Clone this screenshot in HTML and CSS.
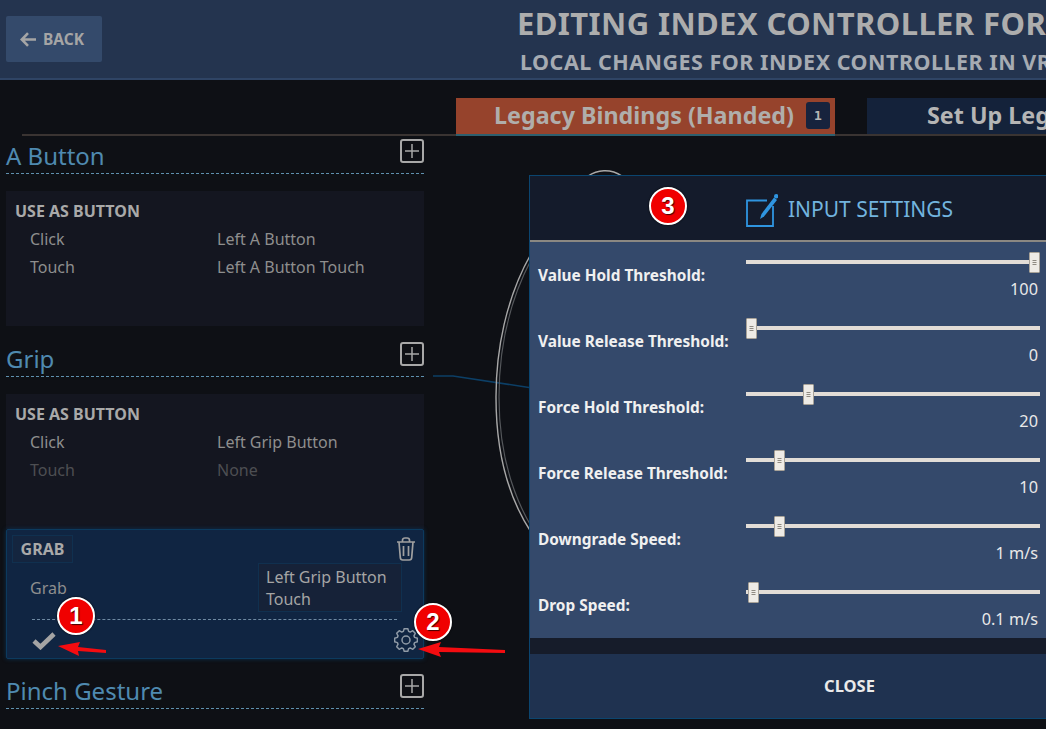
FILE: index.html
```html
<!DOCTYPE html>
<html lang="en">
<head>
<meta charset="utf-8">
<title>Editing Index Controller</title>
<link rel="stylesheet" href="styles.css">
</head>
<body>
<div class="page">
  <header class="topbar">
    <button class="back"><svg class="back-arrow" viewBox="0 0 16 15"><path d="M8 1.200 1.800 7.500 8 13.800M2.500 7.500H16" fill="none" stroke="currentColor" stroke-width="2.600"/></svg>BACK</button>
    <div class="titles">
      <div class="title">EDITING INDEX CONTROLLER FOR</div>
      <div class="subtitle">LOCAL CHANGES FOR INDEX CONTROLLER IN VR</div>
    </div>
  </header>

  <nav class="tabs">
    <div class="tab tab-active">Legacy Bindings (Handed)<span class="count">1</span></div>
    <div class="tab tab-next">Set Up Legacy Bindings</div>
  </nav>

  <svg class="art" viewBox="0 0 1046 729">
    <path class="wire" d="M433 376H453L529 387.500"/>
    <path class="shell" d="M531 254C506 298 496 350 496 397C496 450 508 497 531 532"/>
    <path class="shell2" d="M531 260C509 302 499 350 499 397C499 445 510 490 531 526"/>
    <path class="shell" d="M588 176C597 170 610 168 622 176"/>
  </svg>

  <main class="bindings">
    <section class="group">
      <div class="group-head"><h2>A Button</h2><svg class="plus" viewBox="0 0 24 24"><rect x="1" y="1" width="22" height="22" rx="2"/><path class="plus-bar" d="M12 5v14M5 12h14"/></svg></div>
      <div class="card">
        <h3>USE AS BUTTON</h3>
        <div class="bind"><span>Click</span><span>Left A Button</span></div>
        <div class="bind"><span>Touch</span><span>Left A Button Touch</span></div>
      </div>
    </section>

    <section class="group">
      <div class="group-head"><h2>Grip</h2><svg class="plus" viewBox="0 0 24 24"><rect x="1" y="1" width="22" height="22" rx="2"/><path class="plus-bar" d="M12 5v14M5 12h14"/></svg></div>
      <div class="card">
        <h3>USE AS BUTTON</h3>
        <div class="bind"><span>Click</span><span>Left Grip Button</span></div>
        <div class="bind bind-off"><span>Touch</span><span>None</span></div>
      </div>
      <div class="card-edit">
        <div class="edit-head">
          <span class="chip">GRAB</span>
          <svg class="trash" viewBox="0 0 20 24"><path d="M1 5h18M6.500 5V3.200C6.500 2 7.500 1 9 1h2c1.500 0 2.500 1 2.500 2.200V5M3 5l1.300 15.500C4.400 22 5.300 23 6.700 23h6.600c1.400 0 2.300-1 2.400-2.500L17 5M7.500 9v10M12.500 9v10"/></svg>
        </div>
        <div class="edit-row">
          <span class="edit-name">Grab</span>
          <span class="edit-value">Left Grip Button Touch</span>
        </div>
        <div class="edit-foot">
          <svg class="check" viewBox="0 0 24 19"><path d="M2 10l6.500 6L22 3" fill="none" stroke="currentColor" stroke-width="4.600"/></svg>
          <svg class="gear" viewBox="0 0 24 24"><path d="M9.370 3.390 10.200.64H13.800L14.630 3.390 16.220 4.050 18.760 2.700 21.300 5.240 19.950 7.780 20.610 9.370 23.360 10.200V13.800L20.610 14.630 19.950 16.220 21.300 18.760 18.760 21.300 16.220 19.950 14.630 20.610 13.800 23.360H10.200L9.370 20.610 7.780 19.950 5.240 21.300 2.700 18.760 4.050 16.220 3.390 14.630 .64 13.800V10.200L3.390 9.370 4.050 7.780 2.700 5.240 5.240 2.700 7.780 4.050Z"/><circle cx="12" cy="12" r="4"/></svg>
        </div>
      </div>
    </section>

    <section class="group group-last">
      <div class="group-head"><h2>Pinch Gesture</h2><svg class="plus" viewBox="0 0 24 24"><rect x="1" y="1" width="22" height="22" rx="2"/><path class="plus-bar" d="M12 5v14M5 12h14"/></svg></div>
    </section>
  </main>

  <aside class="modal">
    <div class="modal-head">
      <svg class="edit-icon" viewBox="0 0 32 35"><path d="M21 8.500H1V34H27V14" fill="none" stroke="#2f95e0" stroke-width="1.800"/><path d="M15.500 22 14 27l4-2.500L31 8l-3-2.500z" fill="#2f95e0"/><circle cx="30.200" cy="4.300" r="2.200" fill="#2f95e0"/></svg>
      <span class="modal-title">INPUT SETTINGS</span>
    </div>
    <div class="modal-body">
      <div class="setting"><div class="setting-label">Value Hold Threshold:</div><div class="setting-ctl"><div class="track"><div class="thumb" style="--v:1"></div></div><div class="setting-val">100</div></div></div>
      <div class="setting"><div class="setting-label">Value Release Threshold:</div><div class="setting-ctl"><div class="track"><div class="thumb" style="--v:0"></div></div><div class="setting-val">0</div></div></div>
      <div class="setting"><div class="setting-label">Force Hold Threshold:</div><div class="setting-ctl"><div class="track"><div class="thumb" style="--v:.2"></div></div><div class="setting-val">20</div></div></div>
      <div class="setting"><div class="setting-label">Force Release Threshold:</div><div class="setting-ctl"><div class="track"><div class="thumb" style="--v:.1"></div></div><div class="setting-val">10</div></div></div>
      <div class="setting"><div class="setting-label">Downgrade Speed:</div><div class="setting-ctl"><div class="track"><div class="thumb" style="--v:.1"></div></div><div class="setting-val">1 m/s</div></div></div>
      <div class="setting"><div class="setting-label">Drop Speed:</div><div class="setting-ctl"><div class="track"><div class="thumb" style="--v:.007"></div></div><div class="setting-val">0.1 m/s</div></div></div>
    </div>
    <div class="modal-strip"></div>
    <div class="modal-foot">CLOSE</div>
  </aside>

  <svg class="arrows" viewBox="0 0 1046 729">
    <path d="M58 646 80 642 78 647 106 650 106 653 78 651 79 656z"/>
    <path d="M418 649 441 642 439 647 505 650 505 653 439 652 441 657z"/>
  </svg>
  <div class="marker marker-1">1</div>
  <div class="marker marker-2">2</div>
  <div class="marker marker-3">3</div>
</div>
</body>
</html>
```

FILE: styles.css
```css
* { box-sizing: border-box; }
html, body { margin: 0; padding: 0; }
body { background: #0e1015; font-family: "Noto Sans", "Open Sans", sans-serif; }
.page { position: relative; width: 1046px; height: 729px; overflow: hidden; background: #0e1015; color: #a9a9a9; }

.topbar { height: 80px; display: flex; align-items: flex-start; background: #24344f; border-bottom: 2px solid #2f4465; }
.back { flex: none; margin: 16px 0 0 6px; width: 96px; height: 46px; display: flex; align-items: center; justify-content: center; gap: 7px; padding: 0 4px 0 0; border: 0; border-radius: 2px; background: #344a6b; color: #a5a5a5; font: 700 15.500px "Noto Sans", sans-serif; }
.back-arrow { width: 16px; height: 15px; }
.titles { margin-left: 415px; flex: none; white-space: nowrap; }
.title { margin-top: 4px; font-size: 31px; line-height: 38px; font-weight: 700; letter-spacing: .4px; color: #adadad; }
.subtitle { margin-top: 6px; margin-left: 3px; font-size: 21.500px; line-height: 28px; font-weight: 700; letter-spacing: .5px; color: #a6abb2; }

.tabs { height: 38px; margin: 18px 0 0 22px; display: flex; align-items: flex-start; border-bottom: 2px solid #3a3432; padding-left: 434px; white-space: nowrap; }
.tab { flex: none; display: flex; align-items: center; font-size: 23.300px; font-weight: 700; color: #b0aeab; }
.tab-active { width: 379px; height: 38px; padding: 0 0 2px 38px; background: #96432c; border-bottom: 2px solid #2d5f6e; }
.count { margin-left: 12px; width: 24px; height: 27px; display: flex; align-items: center; justify-content: center; border-radius: 3px; background: #17233d; color: #b6b6b6; font: 700 13px "DejaVu Sans Mono", monospace; }
.tab-next { margin-left: 32px; width: 400px; height: 36px; padding: 0 0 2px 60px; background: #14223a; color: #b5b5b5; }

.art { position: absolute; left: 0; top: 0; width: 1046px; height: 729px; fill: none; pointer-events: none; }
.wire { stroke: #0c3f66; stroke-width: 1.500; }
.shell { stroke: #a8a8a8; stroke-width: 1.400; }
.shell2 { stroke: #55585c; stroke-width: 1.200; }

.bindings { position: relative; width: 418px; margin: 0 0 0 6px; }
.group-head { position: relative; height: 38px; display: flex; justify-content: space-between; border-bottom: 1px dashed #5f90ae; }
.group-head h2 { margin: 4px 0 0; font-size: 24px; line-height: 32px; font-weight: 400; color: #4f8ab0; }
.plus { width: 24px; height: 24px; margin-top: 3px; fill: none; stroke: #a8a8a8; stroke-width: 2; }
.plus-bar { stroke-width: 1.500; }
.group + .group { margin-top: 13px; }
.group + .group-last { margin-top: 12px; }
.card { margin-top: 17px; height: 135px; padding: 8px 9px; background: #141620; font-size: 16px; line-height: 28px; color: #8e8e8e; }
.card h3 { margin: 0; font-size: 16px; line-height: 24px; font-weight: 700; color: #a9a9a9; }
.bind { display: grid; grid-template-columns: 187px 1fr; padding-left: 15px; position: relative; top: 2px; }
.bind-off { color: #4d4e52; }

.card-edit { height: 130px; padding: 5px 5px 0 5px; background: #102542; border: 1px solid #0c3a5e; border-radius: 2px; box-shadow: 0 0 4px #0c3050; color: #8e8e8e; font-size: 16px; }
.edit-head { display: flex; justify-content: space-between; height: 28px; }
.chip { width: 61px; height: 28px; display: flex; align-items: center; justify-content: center; background: #14253f; border: 1px solid #10304f; font-weight: 700; font-size: 16px; color: #a9a9a9; }
.trash { width: 20px; height: 24px; margin: 2px 2px 0 0; fill: none; stroke: #a0a0a0; stroke-width: 1.700; }
.edit-row { position: relative; height: 57px; padding: 13px 0 0; border-bottom: 1px dashed #6f8aa3; margin: 0 21px 0 20px; }
.edit-name { display: block; margin-left: -2px; line-height: 24px; }
.edit-value { position: absolute; left: 226px; top: 0; width: 144px; height: 49px; padding: 2px 7px; background: #162238; border: 1px solid #10304f; line-height: 22px; color: #a5a5a5; }
.edit-foot { display: flex; justify-content: space-between; align-items: flex-start; margin: 8px 0 0 20px; }
.check { width: 24px; height: 19px; color: #a4a4a4; margin-top: 3px; }
.gear { width: 24px; height: 24px; fill: none; stroke: #8f9aa6; stroke-width: 1.500; stroke-linejoin: round; }

.modal { position: absolute; left: 529px; top: 175px; width: 640px; height: 544px; display: flex; flex-direction: column; border: 1px solid #0b456f; border-right: 0; background: #1f3250; }
.modal-head { height: 66px; flex: none; display: flex; align-items: center; justify-content: center; gap: 10px; background: #141b2b; border-bottom: 2px solid #8b8882; color: #72b4df; font-size: 21px; }
.modal-title { position: relative; top: 1px; }
.edit-icon { width: 32px; height: 35px; margin-top: 2px; }
.modal-body { height: 396px; flex: none; padding: 10px 0 0 8px; background: #34496b; }
.setting { height: 66px; display: grid; grid-template-columns: 208px 294px; }
.setting-label { padding-top: 12px; font-size: 15.400px; line-height: 24px; font-weight: 700; color: #f0f0f0; }
.setting-ctl { position: relative; padding-top: 8px; }
.track { position: relative; height: 4px; background: #e2ddd7; }
.thumb { position: absolute; top: -8px; left: calc((100% - 11px) * var(--v)); width: 11px; height: 21px; border: 1px solid #a8a298; border-radius: 1px; background: repeating-linear-gradient(#eeebe6 0 7px, #8f8a82 7px 8px, #eeebe6 8px 9px, #8f8a82 9px 10px, #eeebe6 10px 11px, #8f8a82 11px 12px, #eeebe6 12px 21px); background-clip: padding-box; box-shadow: inset 2.500px 0 #eeebe6, inset -2.500px 0 #eeebe6; }
.setting-val { margin: 14px 2px 0 0; text-align: right; font-size: 16.300px; line-height: 22px; color: #e8e8e8; }
.modal-strip { height: 16px; flex: none; background: #161c2a; }
.modal-foot { flex: 1; display: flex; align-items: center; justify-content: center; background: #1f3250; color: #eaeaea; font-size: 16.500px; font-weight: 700; padding-bottom: 1px; }

.arrows { position: absolute; left: 0; top: 0; width: 1046px; height: 729px; fill: #f40c10; pointer-events: none; }
.marker { position: absolute; width: 38px; height: 38px; display: flex; align-items: center; justify-content: center; border: 2px solid #fff; border-radius: 50%; background: #f00000; color: #fff; font: 700 24px "Liberation Sans", Arial, sans-serif; text-shadow: 1px 1px 1px #400; box-shadow: 0 0 2px #000; }
.marker-1 { left: 57px; top: 597px; }
.marker-2 { left: 414px; top: 603px; }
.marker-3 { left: 649px; top: 187px; }
```
